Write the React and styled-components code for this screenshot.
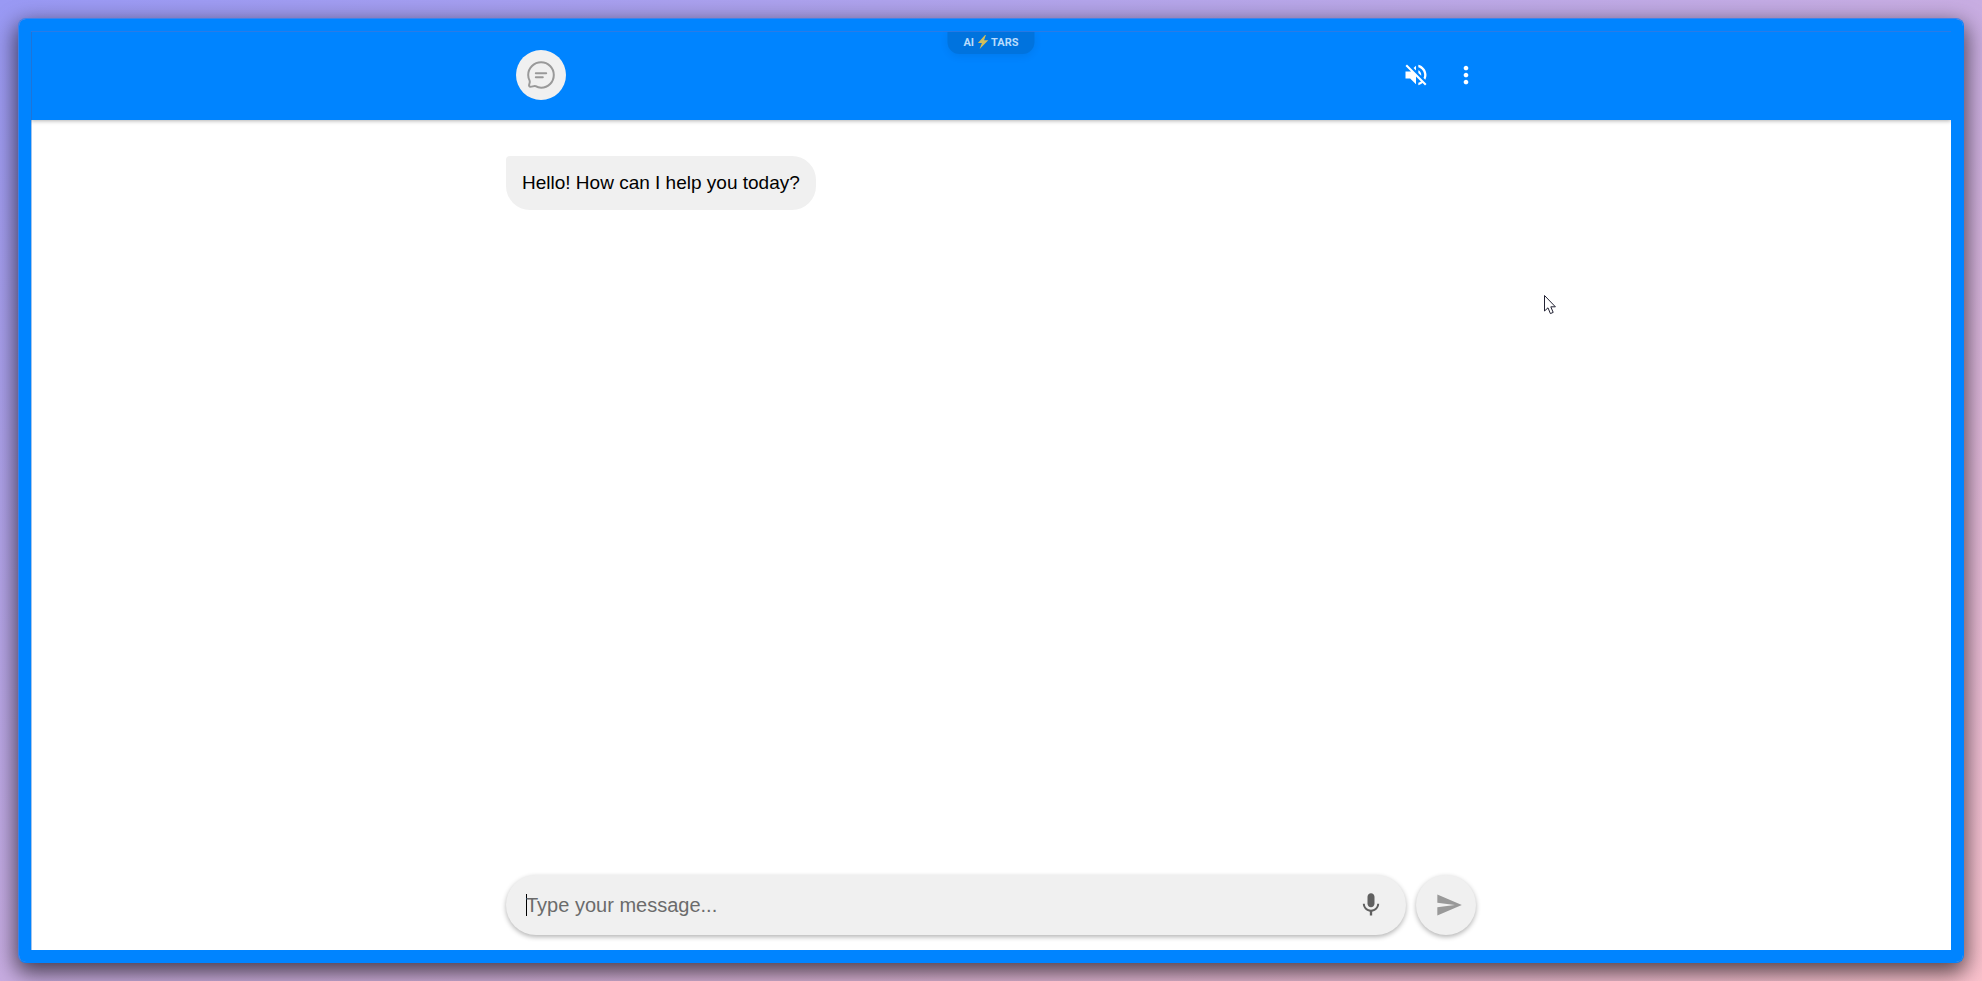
import React, { useState } from 'react';
import styled, { createGlobalStyle } from 'styled-components';
import { MdVolumeOff, MdMoreVert, MdMic, MdSend } from 'react-icons/md';

const GlobalStyle = createGlobalStyle`
  * {
    box-sizing: border-box;
  }

  body {
    margin: 0;
    font-family: 'Liberation Sans', Helvetica, Arial, sans-serif;
  }
`;

const Backdrop = styled.div`
  display: flex;
  min-height: 100vh;
  padding: 18px;
  background: linear-gradient(to bottom right, #9999f4 0%, #c8ade2 50%, #fbc2cd 100%);
`;

const WindowFrame = styled.div`
  flex: 1;
  display: flex;
  padding: 12px;
  background: #0084ff;
  background-clip: padding-box;
  border: 1px solid #0084ff;
  border-top-color: #3d82ea;
  border-left-color: #3d82ea;
  border-radius: 8px;
  box-shadow: 0 8px 22px 2px rgba(0, 0, 0, 0.65);
`;

const ChatPage = styled.div`
  flex: 1;
  display: flex;
  flex-direction: column;
  overflow: hidden;
  background: white;
  box-shadow: inset 1px 0 #a6c4ea;
`;

const Header = styled.header`
  position: relative;
  height: 89px;
  display: flex;
  justify-content: center;
  align-items: center;
  padding-bottom: 2px;
  background: #0084ff;
  border-top: 1px solid #2a7be6;
  box-shadow: inset 1px 0 #1f74d8, 0 1px 4px rgba(0, 0, 0, 0.3);
`;

const HeaderInner = styled.div`
  width: 100%;
  max-width: 970px;
  padding: 0 10px;
  display: flex;
  align-items: center;
  justify-content: space-between;
`;

const Avatar = styled.div`
  display: flex;
  align-items: center;
  justify-content: center;
  width: 50px;
  height: 50px;
  border-radius: 50%;
  background: #f0f0f0;
`;

const HeaderActions = styled.div`
  display: flex;
  gap: 22px;
  margin-right: -14px;
`;

const IconButton = styled.button`
  display: flex;
  align-items: center;
  justify-content: center;
  padding: 0;
  border: none;
  background: none;
  color: ${(props) => props.$color || 'white'};
  cursor: pointer;
`;

const BrandBadge = styled.a`
  position: absolute;
  top: 0;
  left: 50%;
  transform: translateX(-50%);
  display: flex;
  align-items: center;
  gap: 3px;
  height: 22px;
  padding: 0 16px 2px;
  border-radius: 0 0 12px 12px;
  background: #0073de;
  box-shadow: 0 2px 8px rgba(0, 0, 0, 0.08);
  color: #b9dcfc;
  font-family: Roboto, sans-serif;
  font-size: 11px;
  font-weight: 700;
  text-decoration: none;
`;

const Messages = styled.main`
  flex: 1;
  width: 100%;
  max-width: 970px;
  margin: 0 auto;
  padding-top: 36px;
`;

const Bubble = styled.div`
  width: fit-content;
  padding: 16px;
  border-radius: 4px 24px 24px 24px;
  background: #f0f0f0;
  color: black;
  font-size: 19px;
  line-height: 22px;
`;

const Composer = styled.form`
  display: flex;
  gap: 10px;
  width: 100%;
  max-width: 970px;
  margin: 0 auto;
  padding-bottom: 15px;
`;

const InputWrap = styled.div`
  flex: 1;
  display: flex;
  align-items: center;
  height: 60px;
  padding: 0 21px 0 20px;
  border-radius: 30px;
  background: #f0f0f0;
  box-shadow: 0 2px 5px rgba(0, 0, 0, 0.3);
`;

const Caret = styled.span`
  width: 1px;
  height: 22px;
  margin-right: -1px;
  background: black;
`;

const TextInput = styled.input`
  flex: 1;
  min-width: 0;
  padding: 0;
  border: none;
  outline: none;
  background: none;
  color: black;
  font-family: inherit;
  font-size: 20px;

  &::placeholder {
    color: #6b6b6b;
    opacity: 1;
  }
`;

const SendButton = styled.button`
  display: flex;
  align-items: center;
  justify-content: center;
  width: 60px;
  height: 60px;
  padding: 0 0 0 6px;
  border: none;
  border-radius: 50%;
  background: #f0f0f0;
  box-shadow: 0 2px 5px rgba(0, 0, 0, 0.3);
  color: #999;
  cursor: pointer;
`;

const Pointer = styled.svg`
  position: absolute;
  top: 294px;
  left: 1543px;
  pointer-events: none;
`;

const ChatIcon = () => (
  <svg width="28" height="28" viewBox="0 0 28 28" fill="none" stroke="#999" strokeWidth="2" strokeLinecap="round" strokeLinejoin="round">
    <path d="M2.6 19.6 C1.6 17.9 1.2 16 1.2 14 C1.2 7 7 1.2 14.1 1.2 C21.2 1.2 26.8 7 26.8 14 C26.8 21 21.2 26.8 14.1 26.8 C12 26.8 10.2 26.2 8.6 25.2 C7.2 24.6 5.4 25.8 3.6 25.8 C2.2 25.8 1.8 24.8 2.2 23.4 C2.7 21.8 3.2 20.8 2.6 19.6 Z" />
    <path d="M8.8 12.2h10.4M8.8 16.2h7" />
  </svg>
);

const Bolt = () => (
  <svg width="11" height="14" viewBox="0 0 11 14" fill="#d3bf5c">
    <path d="M7.6 0 L0.4 8 H4.4 L2.2 14 L10.8 5.2 H6.6 L8.4 0 Z" />
  </svg>
);

const App = () => {
  const [message, setMessage] = useState('');
  const [messages, setMessages] = useState(['Hello! How can I help you today?']);

  const handleSubmit = (e) => {
    e.preventDefault();
    if (!message.trim()) return;
    setMessages([...messages, message]);
    setMessage('');
  };

  return (
    <Backdrop>
      <GlobalStyle />
      <WindowFrame>
        <ChatPage>
          <Header>
            <BrandBadge href="#">
              AI
              <Bolt />
              TARS
            </BrandBadge>
            <HeaderInner>
              <Avatar>
                <ChatIcon />
              </Avatar>
              <HeaderActions>
                <IconButton type="button" aria-label="Mute sound">
                  <MdVolumeOff size={28} />
                </IconButton>
                <IconButton type="button" aria-label="More options">
                  <MdMoreVert size={28} />
                </IconButton>
              </HeaderActions>
            </HeaderInner>
          </Header>

          <Messages>
            {messages.map((text, i) => (
              <Bubble key={i}>{text}</Bubble>
            ))}
          </Messages>

          <Composer onSubmit={handleSubmit}>
            <InputWrap>
              {!message && <Caret />}
              <TextInput
                autoFocus
                aria-label="Message"
                placeholder="Type your message..."
                value={message}
                onChange={(e) => setMessage(e.target.value)}
              />
              <IconButton type="button" aria-label="Voice input" $color="#606060">
                <MdMic size={28} />
              </IconButton>
            </InputWrap>
            <SendButton type="submit" aria-label="Send">
              <MdSend size={28} />
            </SendButton>
          </Composer>
        </ChatPage>
      </WindowFrame>
      <Pointer width="14" height="22" viewBox="0 0 14 22" fill="white" stroke="#223" strokeWidth="1">
        <path d="M1.5 1.5 V17 L5 13.8 L7.4 19.6 L10.2 18.4 L7.8 12.8 H12.4 Z" />
      </Pointer>
    </Backdrop>
  );
};

export default App;
